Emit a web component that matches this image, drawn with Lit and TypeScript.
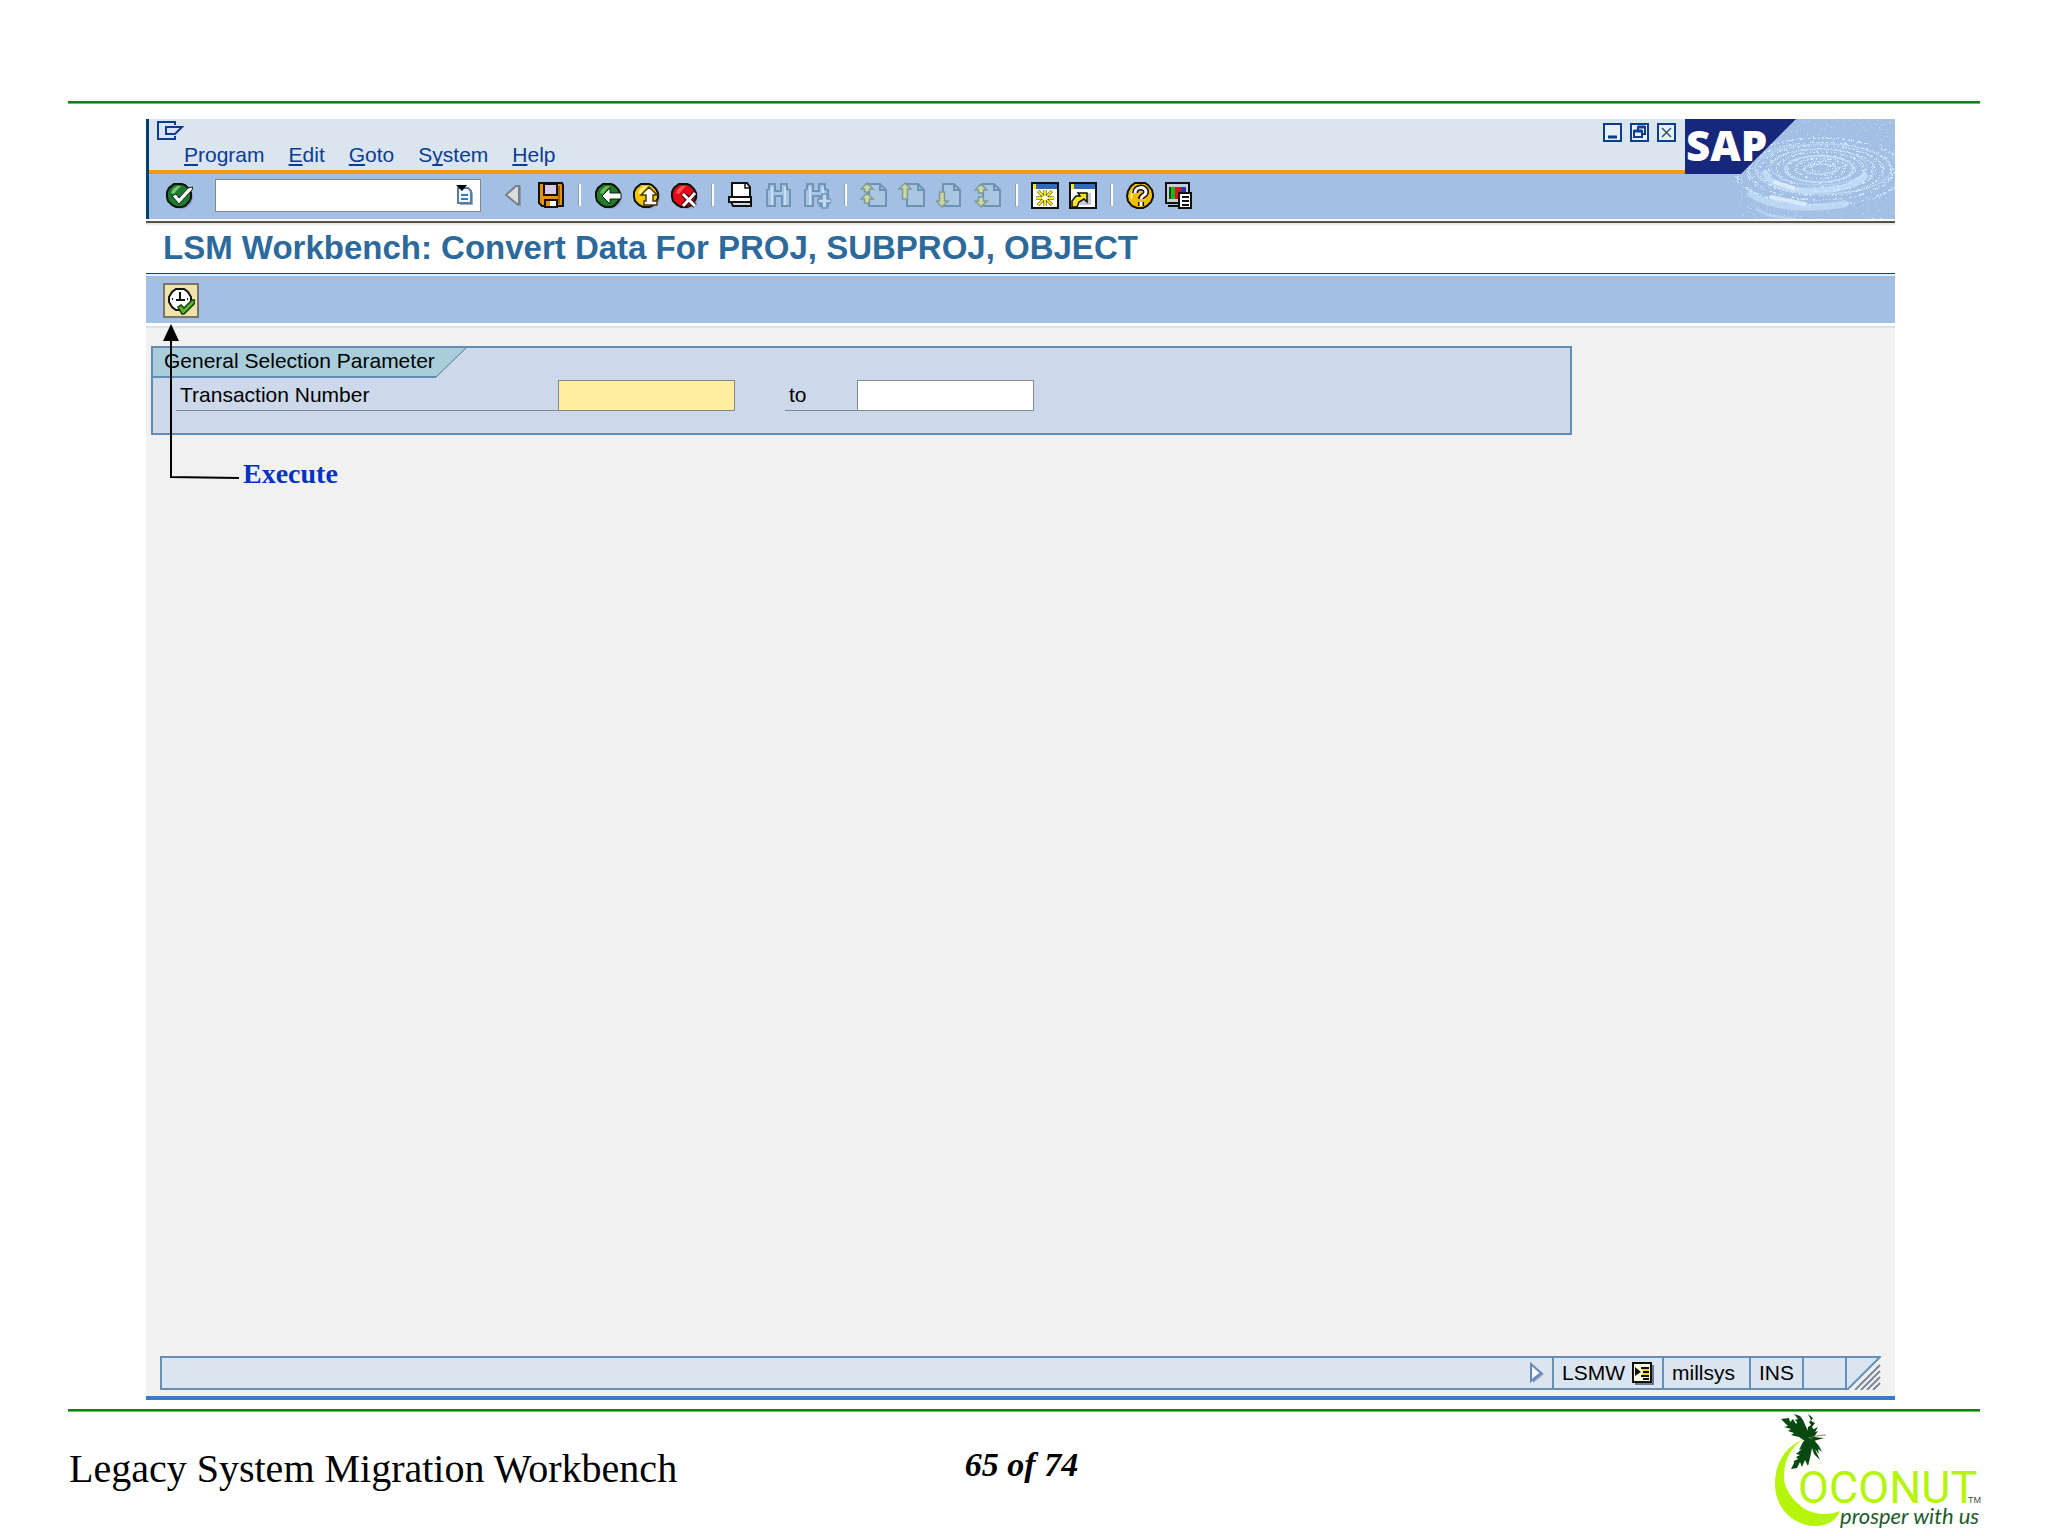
import { LitElement, html, css, svg, nothing, TemplateResult } from "lit";
import { customElement } from "lit/decorators.js";

const MENUS = [
  ["", "P", "rogram"],
  ["", "E", "dit"],
  ["", "G", "oto"],
  ["S", "y", "stem"],
  ["", "H", "elp"],
];

const page = (x: number, y: number) => svg`
  <path d="M${x} ${y}h11l6 6v16h-17z" fill="#a9c6e2" stroke="#6d93b3" stroke-width="2"/>
  <path d="M${x + 11} ${y}v6h6" fill="none" stroke="#6d93b3" stroke-width="2"/>`;
const up = (x: number, y: number, h: number) =>
  svg`<path d="M${x} ${y}l6 6h-3.500v${h}h-5v-${h}h-3.500z" fill="#cfd7a0" stroke="#7d9a98" stroke-width="1.500"/>`;
const down = (x: number, y: number, h: number) =>
  svg`<path d="M${x} ${y}l6 -6h-3.500v-${h}h-5v${h}h-3.500z" fill="#cfd7a0" stroke="#7d9a98" stroke-width="1.500"/>`;
const binoculars = svg`
  <path d="M4 3h6v7h6v-7h6v5l3 1v16h-8v-10h-7v10h-8v-16l2-1z" fill="#a6c5e3" stroke="#6f94b8" stroke-width="2"/>
  <path d="M7 6v18M20 6v18" stroke="#c9ddf2" stroke-width="2"/>`;
const disc = (fill: string, light: string) => svg`
  <circle cx="16" cy="16" r="12" fill="#8a90bd" opacity=".7"/>
  <path d="M9 3h8l3 1 4 4 2 4v5l-2 4-4 4-3 1h-6l-4-2-4-4-1-4v-5l2-4z" fill="${fill}" stroke="#071307" stroke-width="2"/>
  <path d="M6 12l2-4 4-3h4l-4 4-3 4z" fill="${light}"/>`;

const ICONS: Record<string, TemplateResult> = {
  Enter: svg`${disc("#1d7a2c", "#79c476")}
    <path d="M7 15l4-2 3 4 9-10 5-1-1 3-13 14z" fill="#fff" stroke="#0d2410" stroke-width="1"/>`,
  Collapse: svg`<path d="M18 5v20l4 0v-20z" fill="#8698b0"/>
    <path d="M7 14l10-9h3v18h-2z" fill="#d9dedb" stroke="#74808c" stroke-width="2"/>`,
  Save: svg`<path d="M2 2h23l1 2v21h-21l-3-3z" fill="#e8920a" stroke="#111" stroke-width="2"/>
    <path d="M7 3h13v11h-13z" fill="#d8c8ea" stroke="#111" stroke-width="2"/>
    <path d="M8 26v-7h12v7z" fill="#fff" stroke="#111" stroke-width="2"/>
    <path d="M9 20h4v5h-4z" fill="#e8920a"/><path d="M22 5v18" stroke="#a65c00" stroke-width="2"/>`,
  Back: svg`${disc("#237a2a", "#6ab65a")}
    <path d="M8 15l8-8v5h11v6h-11v5z" fill="#fff" stroke="#0d2410" stroke-width="1"/>`,
  Exit: svg`${disc("#f7c400", "#fff27a")}
    <path d="M17 6l8 8h-4v6h4v4h-13v-4h2v-6h-5z" fill="#fff" stroke="#4b3500" stroke-width="1.500"/>`,
  Cancel: svg`${disc("#e30b17", "#ff5a58")}
    <path d="M13 13l12 12M25 12l-12 13" stroke="#3b0005" stroke-width="5"/>
    <path d="M13 13l12 12M25 12l-12 13" stroke="#fff" stroke-width="3"/>`,
  Print: svg`<path d="M5 2h15l3 4v11h-18z" fill="#fff" stroke="#111" stroke-width="2"/>
    <path d="M18 2v5h5" fill="none" stroke="#111" stroke-width="1.500"/>
    <path d="M2 16h22v5h-22z" fill="#fff" stroke="#111" stroke-width="2"/>
    <path d="M4 21h20v4h-18z" fill="#d3d9e4" stroke="#111" stroke-width="2"/>`,
  Find: binoculars,
  "Find next": svg`${binoculars}<path d="M19 13h5v5h4v4h-4v5h-5v-5h-4v-4h4z" fill="#c2d9ef" stroke="#6f94b8" stroke-width="1.500"/>`,
  "First page": svg`${page(9, 3)}${up(7, 2, 3)}${up(7, 12, 4)}`,
  "Previous page": svg`${page(9, 3)}${up(7, 2, 10)}`,
  "Next page": svg`${page(7, 3)}${down(6, 26, 9)}`,
  "Last page": svg`${page(9, 3)}${up(7, 3, 3)}${down(7, 26, 4)}`,
  "New session": svg`<rect x="1" y="2" width="26" height="25" fill="#fff" stroke="#111" stroke-width="2"/>
    <path d="M2 3h24v5h-24z" fill="#2d6bb8"/><path d="M2 3h3v5h-3z" fill="#ffe81c"/>
    <path d="M14 9v6M14 19v6M5 17h6M17 17h6M7 10l5 5M21 10l-5 5M7 24l5-5M21 24l-5-5" stroke="#3a3200" stroke-width="3"/>
    <path d="M14 9v6M14 19v6M5 17h6M17 17h6M7 10l5 5M21 10l-5 5M7 24l5-5M21 24l-5-5" stroke="#f5e61c" stroke-width="2"/>`,
  "Create shortcut": svg`<rect x="1" y="2" width="26" height="25" fill="#fff" stroke="#111" stroke-width="2"/>
    <path d="M2 3h24v5h-24z" fill="#2d6bb8"/><path d="M2 3h3v5h-3z" fill="#ffe81c"/>
    <path d="M16 12h6v12h-12z" fill="#c9c9d6"/>
    <path d="M3 26v-6l4-5h4l-2-3h9v9l-3-3-5 3-2 5z" fill="#f5e61c" stroke="#111" stroke-width="1.500"/>`,
  Help: svg`<path d="M9 2h10l3 2 4 5 1 4v3l-2 5-4 4-4 2h-6l-5-2-4-5-1-5 1-5 3-5z" fill="#f4be00" stroke="#111" stroke-width="2"/>
    <path d="M4 16l2-7 5-5h4l-8 8-1 7z" fill="#fff27a"/>
    <path d="M9 12c0-7 11-7 11-1 0 4-5 3-5 7M15 21v4" fill="none" stroke="#111" stroke-width="6"/>
    <path d="M9 12c0-7 11-7 11-1 0 4-5 3-5 7M15 21v4" fill="none" stroke="#fff" stroke-width="3"/>`,
  "Customize layout": svg`<rect x="2" y="2" width="23" height="20" fill="#c9cdd6" stroke="#111" stroke-width="2"/>
    <path d="M5 6h6v12h-6z" fill="#16b71f"/><path d="M5 6h2v12h-2z" fill="#0a4f0e"/>
    <path d="M11 6h6v12h-6z" fill="#ee0e17"/><path d="M17 6h5v12h-5z" fill="#2a3bb0"/>
    <path d="M4 25h12" stroke="#111" stroke-width="2"/>
    <rect x="15" y="12" width="12" height="15" fill="#fff" stroke="#111" stroke-width="2"/>
    <path d="M18 16h7M18 20h7M18 24h7" stroke="#111" stroke-width="2"/>`,
};

const TOOLBAR = [
  ["Collapse", "Save"],
  ["Back", "Exit", "Cancel"],
  ["Print", "Find", "Find next"],
  ["First page", "Previous page", "Next page", "Last page"],
  ["New session", "Create shortcut"],
  ["Help", "Customize layout"],
];

/* Speckles scattered along flattened rings, as on a disturbed water surface. */
function ripples() {
  let seed = 7;
  const rnd = () => (seed = (seed * 16807) % 2147483647) / 2147483647;
  let fine = "";
  let bright = "";
  for (const r of [10, 17, 25, 34, 44, 53, 62, 72, 84]) {
    for (let i = 0; i < r * 4; i++) {
      const a = rnd() * Math.PI * 2;
      const rr = r + (rnd() - 0.5) * 4;
      const x = Math.round(135 + Math.cos(a) * rr);
      const y = Math.round(48 + Math.sin(a) * rr * 0.4 + r * 0.05);
      fine += `M${x} ${y}h1v1h-1z`;
    }
  }
  for (let i = 0; i < 480; i++) {
    const x = Math.round(55 + rnd() * 155);
    const y = Math.round(rnd() * 100);
    bright += `M${x} ${y}h1v1h-1z`;
  }
  return svg`
    <g fill="none" stroke="#c6e0fb" stroke-linecap="round">
      <ellipse cx="135" cy="50" rx="16" ry="5" stroke-width="1.500" opacity=".7"/>
      <ellipse cx="134" cy="50" rx="34" ry="13" stroke-width="2" opacity=".7"/>
      <ellipse cx="134" cy="48" rx="48" ry="18" stroke-width="1.500" opacity=".5"/>
      <ellipse cx="138" cy="50" rx="68" ry="25" stroke-width="1.500" opacity=".6"/>
      <path d="M80 54c6 14 32 20 62 17 18-2 32-6 38-14" stroke-width="6" opacity=".8"/>
      <path d="M66 75c20 14 60 16 94 10" stroke-width="7" opacity=".7"/>
      <path d="M86 78l34 7M90 63l18 6" stroke="#e8f4ff" stroke-width="4" opacity=".8"/>
      <path d="M72 90c10 8 24 8 38 10" stroke-width="3" opacity=".5"/>
    </g>
    <path d="${fine}" fill="#d4e9ff"/><path d="${bright}" fill="#c3dcf6"/>`;
}

@customElement("app-root")
export class AppRoot extends LitElement {
  static styles = css`
    :host { display: block; background: #fff; color: #000; font-family: "Liberation Sans", Arial, sans-serif; font-size: 21px; line-height: 24px; }
    * { box-sizing: border-box; }
    button { border: 0; padding: 0; background: none; color: inherit; font: inherit; display: block; }
    input { font: inherit; border: 1px solid #83888e; border-radius: 0; background: #fff; padding: 0 6px; margin: 0; min-width: 0; }
    svg { display: block; }
    .slide { min-height: 100vh; display: flex; flex-direction: column; padding-top: 101px; }
    .rule { height: 3px; margin: 0 68px; border: 0; background: #187c1c; border-bottom: 1px solid #62c062; flex: none; }
    .window { position: relative; flex: 1; margin: 15px 153px 9px 146px; display: flex; flex-direction: column; background: #f1f1f1; border-bottom: 4px solid #3a7bd2; }
    .head { display: grid; grid-template-columns: 1fr 210px; border-left: 3px solid #00416e; }
    .menubar { display: flex; justify-content: space-between; align-items: flex-start; height: 55px; background: #dae5f0; border-bottom: 4px solid #f39a12; padding: 2px 9px 0 8px; }
    .menus { display: flex; gap: 24px; padding: 3px 0 0 27px; color: #0a3c92; }
    .menus u { text-underline-offset: 2px; text-decoration-thickness: 2px; text-decoration-skip-ink: none; }
    .winbtns { display: flex; gap: 8px; padding-top: 2px; }
    .banner { grid-column: 2; grid-row: 1 / 3; background: #a4bfe4; overflow: hidden; }
    .toolbar { display: flex; align-items: center; height: 45px; background: #a4bfe4; padding: 0 0 3px 16px; }
    .command { display: flex; margin: 0 18px 0 22px; position: relative; }
    .command input { width: 266px; height: 33px; }
    .drop { position: absolute; right: 8px; top: 6px; }
    .set { display: flex; gap: 10px; }
    .sep { width: 3px; height: 22px; margin: 0 13px; background: #fff; border-left: 1px solid #8d9fae; }
    .title { margin: 0; padding: 6px 17px 0; height: 55px; border-bottom: 1px solid #0b4475; background: linear-gradient(#fff 2px, #55514f 2px, #55514f 4px, #e3dcda 4px, #fff 7px); color: #2c6a9c; font-size: 33px; line-height: 46px; white-space: nowrap; }
    .appbar { background: #a4bfe4; height: 52px; border-top: 2px solid #e6f0fa; border-bottom: 3px solid #fff; padding: 7px 17px 0; }
    .exec { background: #f1e2ab; border: 2px solid #77746a; width: 36px; height: 35px; padding: 1px 2px; }
    .body { flex: 1; border-top: 2px solid #d3e2f4; padding: 18px 5px 0; }
    .group { margin: 0; border: 2px solid #5f8db3; background: #cdd9ea; max-width: 1421px; height: 89px; padding: 0; min-width: 0; }
    .tab { display: grid; width: 316px; }
    .tab svg, .tab span { grid-area: 1 / 1; }
    .tab span { padding: 1px 0 0 11px; }
    .fields { display: flex; align-items: flex-end; padding: 2px 0 0 23px; }
    .fields label { border-bottom: 1px solid #83888e; height: 31px; padding: 3px 0 0 4px; }
    .from { width: 382px; }
    .to { width: 72px; margin-left: 50px; }
    .fields input { width: 177px; height: 31px; }
    .fields .needed { background: #ffeda0; }
    .callout { position: absolute; left: 16px; top: 205px; display: flex; align-items: flex-end; pointer-events: none; }
    .callout span { font: bold 28px/32px "Liberation Serif", "Times New Roman", serif; color: #0433c4; padding-left: 4px; margin-bottom: -10px; }
    .status { display: flex; margin: 0 14px 6px 14px; height: 34px; }
    .cells { flex: 1; display: flex; background: #dae5f0; border: 2px solid #6490b8; border-right: 0; }
    .message { flex: 1; display: flex; justify-content: flex-end; align-items: center; padding-right: 8px; }
    .cell { display: flex; align-items: center; gap: 7px; padding: 0 8px; border-left: 2px solid #6490b8; }
    .user { min-width: 87px; }
    .blank { width: 43px; padding: 0; }
    .footer { display: grid; grid-template-columns: 1fr auto 1fr; align-items: start; height: 124px; padding: 0 66px 0 69px; font-family: "Liberation Serif", "Times New Roman", serif; flex: none; }
    .doc { font-size: 40px; line-height: 46px; margin: 34px 0 0; }
    .num { font-size: 34px; line-height: 38px; font-weight: bold; font-style: italic; margin: 34px 8px 0 0; }
    .logo { justify-self: end; }
    .sap { font: 800 42px "Open Sans", sans-serif; }
    .brand { font: 400 45px Roboto, sans-serif; }
    .motto { font: italic 400 22px Lato, sans-serif; }
    .tm { font: 9px "Liberation Sans", sans-serif; }
  `;

  icon(name: string) {
    return html`<button type="button" aria-label=${name}><svg width="28" height="28" viewBox="0 0 28 28">${ICONS[name]}</svg></button>`;
  }

  render() {
    return html`
      <div class="slide">
        <hr class="rule" />
        <main class="window">
          <header class="head">
            <nav class="menubar">
              <div>
                <svg width="27" height="19" viewBox="0 0 27 19" fill="none" stroke="#0a3c92" stroke-width="2">
                  <path d="M18 4v-3h-17v17h17v-3M9 6h16l-7 7h-9z" />
                </svg>
                <div class="menus">
                  ${MENUS.map(([a, k, b]) => html`<button type="button">${a}<u>${k}</u>${b}</button>`)}
                </div>
              </div>
              <div class="winbtns">
                <button type="button" aria-label="Minimize"><svg width="19" height="19" fill="#e8f0f8" stroke="#0b3f8c" stroke-width="2"><path d="M1 1h17v17h-17z" /><path d="M5 14h9" stroke-width="3" /></svg></button>
                <button type="button" aria-label="Restore"><svg width="19" height="19" fill="#e8f0f8" stroke="#0b3f8c" stroke-width="2"><path d="M1 1h17v17h-17z" /><path d="M8 4h7v7h-7z" /><path d="M4 8h8v6h-8z" /><path d="M4 8h8M8 4h7" stroke-width="3" /></svg></button>
                <button type="button" aria-label="Close"><svg width="19" height="19" fill="#e8f0f8" stroke="#0b3f8c" stroke-width="2"><path d="M1 1h17v17h-17z" /><path d="M5 5l9 9M14 5l-9 9" stroke="#33517d" stroke-width="1.500" /></svg></button>
              </div>
            </nav>
            <svg class="banner" width="210" height="100" viewBox="0 0 210 100">
              ${ripples()}
              <path d="M0 0h111l-55 55h-56z" fill="#17277c" />
              <text class="sap" x="1" y="42" fill="#fff">SAP</text>
            </svg>
            <div class="toolbar">
              ${this.icon("Enter")}
              <div class="command">
                <input type="text" aria-label="Command" />
                <button class="drop" type="button" aria-label="Command history">
                  <svg width="17" height="20" viewBox="0 0 17 20">
                    <path d="M4 5h10l3 3v12h-13z" fill="#9aa9c0" /><path d="M2 3h10l3 3v12h-13z" fill="#f2f8ff" stroke="#5b7ba3" stroke-width="2" />
                    <path d="M5 10h7M5 14h7" stroke="#2f7fc0" stroke-width="2" /><path d="M0 0h11l-5 6z" fill="#000" />
                  </svg>
                </button>
              </div>
              ${TOOLBAR.map((set, i) => html`${i ? html`<span class="sep"></span>` : nothing}<div class="set">${set.map((n) => this.icon(n))}</div>`)}
            </div>
          </header>
          <h1 class="title">LSM Workbench: Convert Data For PROJ, SUBPROJ, OBJECT</h1>
          <div class="appbar">
            <button class="exec" type="button" aria-label="Execute">
              <svg width="28" height="28" viewBox="0 0 28 28">
                <path d="M9 2h8l4 3 3 5v5l-3 5-4 3h-8l-4-3-3-5v-5l3-5z" fill="#fff" stroke="#111" stroke-width="2" />
                <path d="M13 5v8M9 13h9M5 12h1M20 12h1M13 19v2" stroke="#111" stroke-width="2" fill="none" />
                <path d="M11 20l3-2 3 3 8-8h3l-1 4-10 10h-2z" fill="#5fb52a" stroke="#0f3f0a" stroke-width="1.500" />
              </svg>
            </button>
          </div>
          <section class="body">
            <form class="group" aria-label="General Selection Parameter">
              <div class="tab">
                <svg width="316" height="30" viewBox="0 0 316 30">
                  <path d="M0 0h313l-30 29h-283z" fill="#a9cddb" /><path d="M0 29h283" stroke="#5f8db3" stroke-width="2" /><path d="M283 29l30-29" stroke="#4a7a8c" stroke-width="1" />
                </svg>
                <span>General Selection Parameter</span>
              </div>
              <div class="fields">
                <label class="from" for="low">Transaction Number</label><input class="needed" id="low" type="text" />
                <label class="to" for="high">to</label><input id="high" type="text" />
              </div>
            </form>
          </section>
          <div class="status">
            <div class="cells">
              <div class="message">
                <svg width="14" height="22" viewBox="0 0 14 22"><path d="M3 4v17l11-9z" fill="#8a9bb5" /><path d="M1 2v17l10-8z" fill="#f4f8fd" stroke="#6288b8" stroke-width="2" /></svg>
              </div>
              <div class="cell">LSMW
                <svg width="22" height="23" viewBox="0 0 22 23"><path d="M3 3h19v20h-19z" fill="#6b7890" /><path d="M1 1h18v19h-18z" fill="#fffbe0" stroke="#111" stroke-width="2" />
                  <path d="M9 6h8M11 10h6M9 14h8M11 17h6" stroke="#111" stroke-width="2" /><path d="M10 8h7M10 12h7" stroke="#f0dc18" stroke-width="2" /><path d="M3 5l6 5-6 4z" fill="#111" /></svg>
              </div>
              <div class="cell user">millsys</div>
              <div class="cell">INS</div>
              <div class="cell blank"></div>
            </div>
            <svg width="36" height="34" viewBox="0 0 36 34">
              <path d="M1 1h34l-32 32h-2z" fill="#dae5f0" stroke="#6490b8" stroke-width="2" />
              <path d="M10 34l25-25M16 34l19-19M22 34l13-13M28 34l7-7" stroke="#7a8797" stroke-width="2" />
            </svg>
          </div>
          <div class="callout">
            <svg width="77" height="156" viewBox="0 0 77 156"><path d="M9 14v139l68 1" fill="none" stroke="#000" stroke-width="2" /><path d="M9 0l8 17h-16z" /></svg>
            <span>Execute</span>
          </div>
        </main>
        <hr class="rule" />
        <footer class="footer">
          <p class="doc">Legacy System Migration Workbench</p>
          <p class="num">65 of 74</p>
          <svg class="logo" width="208" height="123" viewBox="0 0 208 123">
            <path d="M30 27C12 34 1 50 1 72C1 98 22 115 44 114C56 113 63 107 66 99C54 104 38 103 28 95C14 84 9 72 10 62C11 46 18 34 30 27Z" fill="#b5f50c" />
            <g fill="#07490f">
              <path d="M31 29L25 25 17 23 20 21 14 19 17 17 10 15 14 14 7 7 15 6 16 10 19 7 22 12 24 9 29 17 36 24z" />
              <path d="M28 22L26 16 23 14 25 12 21 8 24 7 20 2 26 4 29 8 33 17 37 26z" />
              <path d="M33 22L34 15 37 13 35 10 37 8 34 2 39 6 37 9 41 11 38 15 40 18 37 25z" />
              <path d="M35 24L38 18 44 15 41 20 44 19 40 25 50 26 40 29z" />
              <path d="M34 25L40 28 45 34 48 40 44 37 45 42 41 37 46 48 40 42 38 36 36 46 34 54 31 48 28 55 26 50 23 56 17 57 20 51 20 49 24 47 22 45 26 43 22 42 28 37 25 38 29 30z" />
            </g>
            <path d="M38 25q7-2 14-2" fill="none" stroke="#8a8a52" stroke-width="1" />
            <text class="brand" x="24" y="91" fill="#b5f50c">OCONUT</text>
            <text class="tm" x="194" y="91" fill="#35543b">TM</text>
            <text class="motto" x="66" y="112" fill="#1d5c2c">prosper with us</text>
          </svg>
        </footer>
      </div>`;
  }
}
